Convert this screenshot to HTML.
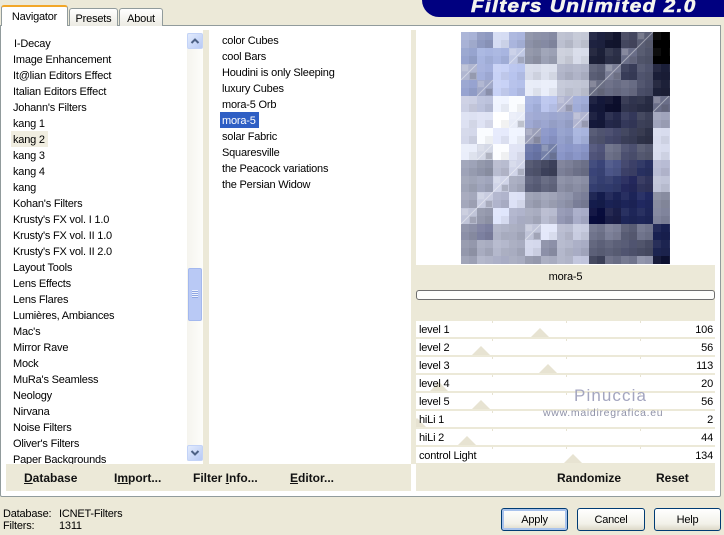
<!DOCTYPE html>
<html><head><meta charset="utf-8"><style>
html,body{margin:0;padding:0}
body{width:724px;height:532px;overflow:hidden;position:relative;background:#ece9d8;font-family:"Liberation Sans",sans-serif;font-size:11px;letter-spacing:-.2px;color:#000}
div{position:absolute;box-sizing:border-box}
.t{white-space:nowrap;line-height:17px}
.tab{border:1px solid #919b9c;border-bottom:none;border-radius:3px 3px 0 0;background:linear-gradient(#fff,#ecebe3);text-align:center;line-height:18px}
.li{left:13px;white-space:nowrap;line-height:18px;height:16px}
.l2{left:222px;white-space:nowrap;line-height:18px;height:16px}
.sb{left:187px;width:16px;height:16px;background:linear-gradient(135deg,#e2ebfd,#b8caf5);border:1px solid #c3d3f7;border-radius:2px}
.row{left:416px;width:299px;height:16px;background:#fff;overflow:hidden}
.row span{position:absolute;left:3px;top:0;line-height:18px}
.row b{position:absolute;right:2px;top:0;line-height:18px;font-weight:normal}
.tri{position:absolute;width:0;height:0;border-left:9px solid transparent;border-right:9px solid transparent;border-bottom:9px solid #e7e3d2;top:7px}
.tk{position:absolute;top:0;width:1px;height:2px;background:#e7e3d2}
.bb{font-weight:bold;font-size:12px;letter-spacing:0;white-space:nowrap;line-height:16px;color:#111}
.btn{top:508px;height:23px;border:1px solid #003c74;border-radius:3px;background:linear-gradient(#fff,#f2f1e9 70%,#dcd8c8);text-align:center;line-height:23px}
</style></head><body>
<div style="left:422px;top:0;width:302px;height:17px;background:#000080;border-radius:0 0 0 20px"></div>
<div class="t" style="left:471px;top:-4px;color:#f4f4ee;font-weight:bold;font-style:italic;font-size:18px;line-height:20px;letter-spacing:1.2px;-webkit-text-stroke:.6px #f4f4ee;transform:scaleX(1.15);transform-origin:0 0">Filters Unlimited 2.0</div>

<div style="left:0;top:25px;width:721px;height:472px;background:#fff;border:1px solid #919b9c;border-radius:0 0 2px 2px"></div>
<div class="tab" style="left:69px;top:8px;width:49px;height:18px;padding-top:1px">Presets</div>
<div class="tab" style="left:119px;top:8px;width:44px;height:18px;padding-top:1px">About</div>
<div class="tab" style="left:1px;top:5px;width:67px;height:21px;background:#fff;border-top:2px solid #f2a728;padding-top:1px;border-bottom:none">Navigator</div>

<div style="left:187px;top:33px;width:16px;height:428px;background:linear-gradient(90deg,#f5f4ee,#fdfdfa)"></div>
<div style="left:203px;top:30px;width:6px;height:434px;background:#ece9d8"></div>
<div style="left:411px;top:30px;width:5px;height:434px;background:#ece9d8"></div>
<div class="li" style="top:35px;left:14px">I-Decay</div>
<div class="li" style="top:51px">Image Enhancement</div>
<div class="li" style="top:67px">It@lian Editors Effect</div>
<div class="li" style="top:83px">Italian Editors Effect</div>
<div class="li" style="top:99px">Johann's Filters</div>
<div class="li" style="top:115px">kang 1</div>
<div style="left:11px;top:131px;width:37px;height:16px;background:#f0ede0"></div>
<div class="li" style="top:131px">kang 2</div>
<div class="li" style="top:147px">kang 3</div>
<div class="li" style="top:163px">kang 4</div>
<div class="li" style="top:179px">kang</div>
<div class="li" style="top:195px">Kohan's Filters</div>
<div class="li" style="top:211px">Krusty's FX vol. I 1.0</div>
<div class="li" style="top:227px">Krusty's FX vol. II 1.0</div>
<div class="li" style="top:243px">Krusty's FX vol. II 2.0</div>
<div class="li" style="top:259px">Layout Tools</div>
<div class="li" style="top:275px">Lens Effects</div>
<div class="li" style="top:291px">Lens Flares</div>
<div class="li" style="top:307px">Lumières, Ambiances</div>
<div class="li" style="top:323px">Mac's</div>
<div class="li" style="top:339px">Mirror Rave</div>
<div class="li" style="top:355px">Mock</div>
<div class="li" style="top:371px">MuRa's Seamless</div>
<div class="li" style="top:387px">Neology</div>
<div class="li" style="top:403px">Nirvana</div>
<div class="li" style="top:419px">Noise Filters</div>
<div class="li" style="top:435px">Oliver's Filters</div>
<div class="li" style="top:451px">Paper Backgrounds</div>
<div style="left:6px;top:464px;width:405px;height:27px;background:#ece9d8"></div>

<div class="sb" style="top:33px"><svg width="14" height="14" style="position:absolute;left:0;top:0"><path d="M3.500 9 L7 5.500 L10.500 9" fill="none" stroke="#4d6185" stroke-width="2"/></svg></div>
<div class="sb" style="top:445px"><svg width="14" height="14" style="position:absolute;left:0;top:0"><path d="M3.500 5 L7 8.500 L10.500 5" fill="none" stroke="#4d6185" stroke-width="2"/></svg></div>
<div style="left:188px;top:268px;width:14px;height:53px;background:#b9c9f5;border:1px solid #a3b8ee;border-radius:2px"></div>
<div style="left:192px;top:290px;width:6px;height:8px;background:repeating-linear-gradient(#eef2fd 0,#eef2fd 1px,#8ea6e2 1px,#8ea6e2 2px)"></div>

<div style="left:220px;top:112px;width:39px;height:16px;background:#2f5fc4"></div>
<div class="l2" style="top:32px">color Cubes</div>
<div class="l2" style="top:48px">cool Bars</div>
<div class="l2" style="top:64px">Houdini is only Sleeping</div>
<div class="l2" style="top:80px">luxury Cubes</div>
<div class="l2" style="top:96px">mora-5 Orb</div>
<div class="l2" style="top:112px;color:#fff">mora-5</div>
<div class="l2" style="top:128px">solar Fabric</div>
<div class="l2" style="top:144px">Squaresville</div>
<div class="l2" style="top:160px">the Peacock variations</div>
<div class="l2" style="top:176px">the Persian Widow</div>

<div class="bb" style="left:24px;top:470px"><u>D</u>atabase</div>
<div class="bb" style="left:114px;top:470px">I<u>m</u>port...</div>
<div class="bb" style="left:193px;top:470px">Filter <u>I</u>nfo...</div>
<div class="bb" style="left:290px;top:470px"><u>E</u>ditor...</div>

<svg width="209" height="232" style="position:absolute;left:461px;top:32px" shape-rendering="crispEdges"><g id="g"></g>
<defs><pattern id="p" width="16" height="16" patternUnits="userSpaceOnUse"><rect x="0" y="0" width="8" height="8" fill="#fff" opacity=".05"/><rect x="8" y="8" width="8" height="8" fill="#000" opacity=".05"/></pattern></defs>
<rect width="209" height="232" fill="url(#p)"/><g id="d" shape-rendering="auto"></g></svg>
<script>
var r=`a8b2d6,8e99c0,d5dcf3,aab5dd,8d92a8,858aa3,bcc0d0,c4c8d6,1e2240,12152e,44475f,5a5e74,000000
97a4cf,a8b5e0,a8b5e0,c0c8e4,9095a8,9ca1b5,ccd0dc,d8dcea,1c2038,2c3048,6a6e88,50546a,000000
b0b6d0,a4b0dc,c8d2f6,b8c4ee,d8dcea,dde1ee,b0b4c8,b0b4c8,5a5e75,7a7e96,383c58,50546e,1a1e38
97a3d0,a0a8c8,c8d2f6,b4c0ea,e8ecf8,eaeefa,c4c8d8,c0c4d4,6a6e84,686c84,686c84,4a4e68,1c2038
ccd0e4,bcc2dc,f0f4ff,fafcff,a8b4e0,bcc6ee,b0b4d0,a0acd8,14183a,0c0e2c,30344e,282c44,6a6e88
dde1f2,dfe3f4,ffffff,e8ecf8,a0aad4,9ca6d0,9aa4cc,b0b4d0,14183a,24284a,34385a,3c4058,a0a4bc
d4d8ea,fafcff,e6eafc,f0f4ff,9a9eb8,8a96c8,94a0cc,a8b4de,505470,44486a,3a3e58,2e3248,d8dcee
eaeefa,d4d8e6,fcfdff,dfe3f4,6a76a8,7480a8,8a96c8,8a96c8,50547a,6c7088,4c5070,545870,d8dcee
9ea3b8,8e93a8,b8bcd0,d0d4e8,50546e,3c405a,7c8098,6c7088,3a4478,4c5688,3c4068,283060,b8bcd4
a0a5b8,a0a5bc,d0d4e8,a8acc0,5a5e78,62667e,8a8ea4,8a8ea4,343e70,303a6c,24285c,30345c,c0c4d8
a4a8bc,c8cce0,b0b4cc,dde1f6,9ca0b4,a0a4b8,9095ac,7a7e98,141c4c,1a2254,1c2458,202860,888ca0
c0c4d8,9498ac,e0e6fc,b0b4cc,a8acc0,b8bcd0,9498b4,a8acc8,080c3c,1a1e48,1e2658,1e2658,80849c
8c90a8,7c80a0,b0b4c8,a8acc0,c0c4d8,e4e8fa,b8bcd0,c8cce0,70748c,7c8098,585c74,70748c,182050
9498ac,a8acc0,b4b8cc,a8acc0,d4d8ec,8c90a8,b4b8cc,a8acc4,5c6078,5c6078,505470,484c64,1c2450
9ca0b4,b0b4c8,a8acc4,a8acc0,9498ac,a8acc0,b0b4c8,c0c4dc,3c4058,686c84,70748c,8c90a8,0c1030`.split("\n"),h="";
r.forEach(function(l,y){l.split(",").forEach(function(c,x){h+='<rect x="'+x*16+'" y="'+y*16+'" width="'+(x==12?17:16)+'" height="16" fill="#'+c+'"/>'})});
document.getElementById("g").innerHTML=h;
var s="",q=[[3,1],[0,2],[1,3],[10,1],[9,2],[8,3],[11,0],[12,4],[6,4],[7,5],[3,5],[4,6],[5,7],[1,7],[3,8],[2,9],[1,10],[0,11],[4,12]];
q.forEach(function(a){var x=a[0]*16,y=a[1]*16;
s+='<rect x="'+(x+1)+'" y="'+(y+1)+'" width="6" height="6" fill="#fff" opacity=".15"/><rect x="'+(x+9)+'" y="'+(y+9)+'" width="6" height="6" fill="#556" opacity=".22"/><path d="M'+x+' '+(y+16)+'L'+(x+16)+' '+y+'" stroke="#fff" stroke-opacity=".4" stroke-width="1"/>'});
document.getElementById("d").innerHTML=s;
</script>

<div style="left:416px;top:265px;width:299px;height:226px;background:#ece9d8"></div>
<div class="t" style="left:416px;top:269px;width:299px;text-align:center">mora-5</div>
<div style="left:416px;top:290px;width:299px;height:10px;background:#fdfdfb;border:1px solid #6e6e6e;border-radius:3px"></div>

<div class="row" style="top:321px"><i class="tk" style="left:76px"></i><i class="tk" style="left:150px"></i><i class="tk" style="left:224px"></i><i class="tri" style="left:115px"></i><span>level 1</span><b>106</b></div>
<div class="row" style="top:339px"><i class="tk" style="left:76px"></i><i class="tk" style="left:150px"></i><i class="tk" style="left:224px"></i><i class="tri" style="left:56px"></i><span>level 2</span><b>56</b></div>
<div class="row" style="top:357px"><i class="tk" style="left:76px"></i><i class="tk" style="left:150px"></i><i class="tk" style="left:224px"></i><i class="tri" style="left:123px"></i><span>level 3</span><b>113</b></div>
<div class="row" style="top:375px"><i class="tk" style="left:76px"></i><i class="tk" style="left:150px"></i><i class="tk" style="left:224px"></i><i class="tri" style="left:14px"></i><span>level 4</span><b>20</b></div>
<div class="row" style="top:393px"><i class="tk" style="left:76px"></i><i class="tk" style="left:150px"></i><i class="tk" style="left:224px"></i><i class="tri" style="left:56px"></i><span>level 5</span><b>56</b></div>
<div class="row" style="top:411px"><i class="tk" style="left:76px"></i><i class="tk" style="left:150px"></i><i class="tk" style="left:224px"></i><i class="tri" style="left:-8px"></i><span>hiLi 1</span><b>2</b></div>
<div class="row" style="top:429px"><i class="tk" style="left:76px"></i><i class="tk" style="left:150px"></i><i class="tk" style="left:224px"></i><i class="tri" style="left:42px"></i><span>hiLi 2</span><b>44</b></div>
<div class="row" style="top:447px"><i class="tk" style="left:76px"></i><i class="tk" style="left:150px"></i><i class="tk" style="left:224px"></i><i class="tri" style="left:148px"></i><span>control Light</span><b>134</b></div>

<div class="t" style="left:574px;top:386px;color:#a4a6c0;font-size:17px;line-height:20px;letter-spacing:1.1px">Pinuccia</div>
<div class="t" style="left:543px;top:406px;color:#8f92a8;font-size:10.500px;line-height:14px;letter-spacing:.7px">www.maidiregrafica.eu</div>

<div class="bb" style="left:557px;top:470px">Randomize</div>
<div class="bb" style="left:656px;top:470px">Reset</div>

<div class="t" style="left:3px;top:506px">Database:</div>
<div class="t" style="left:59px;top:506px">ICNET-Filters</div>
<div class="t" style="left:3px;top:518px">Filters:</div>
<div class="t" style="left:59px;top:518px">1311</div>

<div class="btn" style="left:501px;width:67px;box-shadow:inset 0 0 0 2px #a9c3ec">Apply</div>
<div class="btn" style="left:577px;width:68px">Cancel</div>
<div class="btn" style="left:654px;width:67px">Help</div>
</body></html>
